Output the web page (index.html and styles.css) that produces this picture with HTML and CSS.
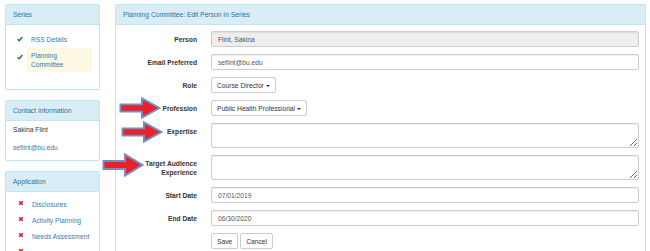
FILE: index.html
```html
<!DOCTYPE html>
<html lang="en">
<head>
  <meta charset="UTF-8">
  <title>Planning Committee: Edit Person In Series</title>
  <link rel="stylesheet" href="styles.css">
</head>
<body>

  <div class="page">
    <aside class="sidebar">
      <div class="panel">
        <div class="panel-heading">Series</div>
        <ul class="steps series-steps">
          <li>
            <svg class="icon ok" viewBox="0 0 10 10"><path d="M1 5.4 L3.6 8 L9 1.8" /></svg>
            <a href="#">RSS Details</a>
          </li>
          <li class="active">
            <svg class="icon ok" viewBox="0 0 10 10"><path d="M1 5.4 L3.6 8 L9 1.8" /></svg>
            <a href="#">Planning Committee</a>
          </li>
        </ul>
      </div>

      <div class="panel">
        <div class="panel-heading">Contact Information</div>
        <ul class="contact">
          <li>Sakina Flint</li>
          <li><a href="#">seflint@bu.edu</a></li>
        </ul>
      </div>

      <div class="panel">
        <div class="panel-heading">Application</div>
        <ul class="steps app-steps">
          <li>
            <svg class="icon no" viewBox="0 0 10 10"><path d="M2 2 L8 8 M8 2 L2 8" /></svg>
            <a href="#">Disclosures</a>
          </li>
          <li>
            <svg class="icon no" viewBox="0 0 10 10"><path d="M2 2 L8 8 M8 2 L2 8" /></svg>
            <a href="#">Activity Planning</a>
          </li>
          <li>
            <svg class="icon no" viewBox="0 0 10 10"><path d="M2 2 L8 8 M8 2 L2 8" /></svg>
            <a href="#">Needs Assessment</a>
          </li>
          <li>
            <svg class="icon no" viewBox="0 0 10 10"><path d="M2 2 L8 8 M8 2 L2 8" /></svg>
          </li>
        </ul>
      </div>
    </aside>

    <main class="panel main-panel">
      <div class="panel-heading">Planning Committee: Edit Person In Series</div>
      <form class="edit-form">
        <div class="row">
          <label>Person</label>
          <input class="field" type="text" value="Flint, Sakina" disabled>
        </div>
        <div class="row">
          <label>Email Preferred</label>
          <input class="field" type="text" value="seflint@bu.edu">
        </div>
        <div class="row">
          <label>Role</label>
          <div><button type="button" class="btn">Course Director <span class="caret"></span></button></div>
        </div>
        <div class="row">
          <label>Profession</label>
          <div><button type="button" class="btn">Public Health Professional <span class="caret"></span></button></div>
        </div>
        <div class="row">
          <label>Expertise</label>
          <textarea class="field area"></textarea>
        </div>
        <div class="row">
          <label>Target Audience Experience</label>
          <textarea class="field area"></textarea>
        </div>
        <div class="row">
          <label>Start Date</label>
          <input class="field" type="text" value="07/01/2019">
        </div>
        <div class="row">
          <label>End Date</label>
          <input class="field" type="text" value="06/30/2020">
        </div>
        <div class="row">
          <span></span>
          <div class="actions">
            <button type="button" class="btn">Save</button>
            <button type="button" class="btn">Cancel</button>
          </div>
        </div>
      </form>
    </main>

    <!-- callout arrows pasted over the screenshot -->
    <svg class="arrow arrow-profession" viewBox="0 0 42 24" preserveAspectRatio="none"><polygon points="1.5,8 23,8 23,1.5 40.5,12 23,22.5 23,16 1.5,16" /></svg>
    <svg class="arrow arrow-expertise" viewBox="0 0 42 24" preserveAspectRatio="none"><polygon points="1.5,8 23,8 23,1.5 40.5,12 23,22.5 23,16 1.5,16" /></svg>
    <svg class="arrow arrow-target" viewBox="0 0 42 24" preserveAspectRatio="none"><polygon points="1.5,8 23,8 23,1.5 40.5,12 23,22.5 23,16 1.5,16" /></svg>
  </div>

</body>
</html>
```

FILE: styles.css
```css
body {
  margin: 0;
  font-family: "Liberation Sans", Arial, sans-serif;
  font-size: 6.7px;
  color: #333;
  background: #fff;
}

a {
  color: #337ab7;
  text-decoration: none;
}

ul {
  list-style: none;
  margin: 0;
  padding: 0;
}

.page {
  position: relative;
  display: flex;
  gap: 15px;
  padding: 4px 4px 0 5px;
  height: 251px;
  box-sizing: border-box;
  overflow: hidden;
}

.sidebar {
  width: 95px;
  flex: none;
  display: flex;
  flex-direction: column;
  gap: 10px;
}

.panel {
  border: 1px solid #bce8f1;
  border-radius: 2px;
  background: #fff;
  box-shadow: 0 1px 1px rgba(0,0,0,0.03);
}

.panel-heading {
  height: 19px;
  line-height: 19px;
  padding: 0 7px;
  background: #d9edf7;
  color: #31708f;
  border-bottom: 1px solid #bce8f1;
}

/* step lists */

.steps li {
  display: flex;
  align-items: flex-start;
}

.steps .icon {
  flex: none;
  width: 6px;
  height: 6px;
  margin: 4px 4px 0 0;
  fill: none;
}

.icon.ok {
  stroke: #2b7a1f;
  stroke-width: 2.4;
}

.icon.no {
  stroke: #e0161d;
  stroke-width: 2.6;
}

.steps a {
  flex: 1;
  display: block;
  padding: 3px 4px;
  line-height: 9px;
}

.series-steps {
  padding: 7px 7px 17px 11px;
}

.series-steps li + li {
  margin-top: 1px;
}

.series-steps .active a {
  background: #fcf8e3;
}

.series-steps .active .icon {
  margin-top: 6px;
}

.app-steps {
  padding: 4px 4px 4px 12px;
}

.app-steps li {
  height: 16px;
}

.app-steps a {
  padding: 3.5px 4px;
  white-space: nowrap;
}

.contact {
  padding: 0 7px 3px;
}

.contact li {
  height: 18px;
  line-height: 18px;
}

/* main form */

.main-panel {
  flex: 1;
  border-bottom: none;
  border-radius: 2px 2px 0 0;
}

.edit-form {
  padding: 6px 6px 0 7px;
}

.row {
  display: grid;
  grid-template-columns: 74px 1fr;
  column-gap: 14px;
  margin-bottom: 7px;
}

.row label {
  text-align: right;
  font-weight: bold;
  line-height: 9px;
  padding-top: 3.5px;
}

.field {
  box-sizing: border-box;
  width: 100%;
  height: 16px;
  margin: 0;
  padding: 0 6px;
  font-family: inherit;
  font-size: 6.7px;
  color: #555;
  background: #fff;
  border: 1px solid #ccc;
  border-radius: 2px;
  box-shadow: inset 0 1px 1px rgba(0,0,0,0.075);
}

.field:disabled {
  background: #eee;
  color: #555;
}

.area {
  height: 25px;
  resize: vertical;
  display: block;
}

.btn {
  height: 16px;
  padding: 0 5px;
  font-family: inherit;
  font-size: 6.7px;
  color: #333;
  background: #fff;
  border: 1px solid #ccc;
  border-radius: 2px;
  cursor: pointer;
}

.caret {
  display: inline-block;
  width: 0;
  height: 0;
  margin-left: 0;
  vertical-align: middle;
  border-top: 2.5px solid #333;
  border-left: 2px solid transparent;
  border-right: 2px solid transparent;
}

.actions {
  display: flex;
  gap: 2px;
}

/* callout arrows */

.arrow {
  position: absolute;
  width: 42px;
  height: 22px;
}

.arrow polygon {
  fill: #e8212b;
  stroke: #6f8fc6;
  stroke-width: 2;
  stroke-linejoin: miter;
}

.arrow-profession {
  left: 119px;
  top: 97px;
}

.arrow-expertise {
  left: 121px;
  top: 121px;
}

.arrow-target {
  left: 102px;
  top: 153px;
  height: 24px;
}
```
